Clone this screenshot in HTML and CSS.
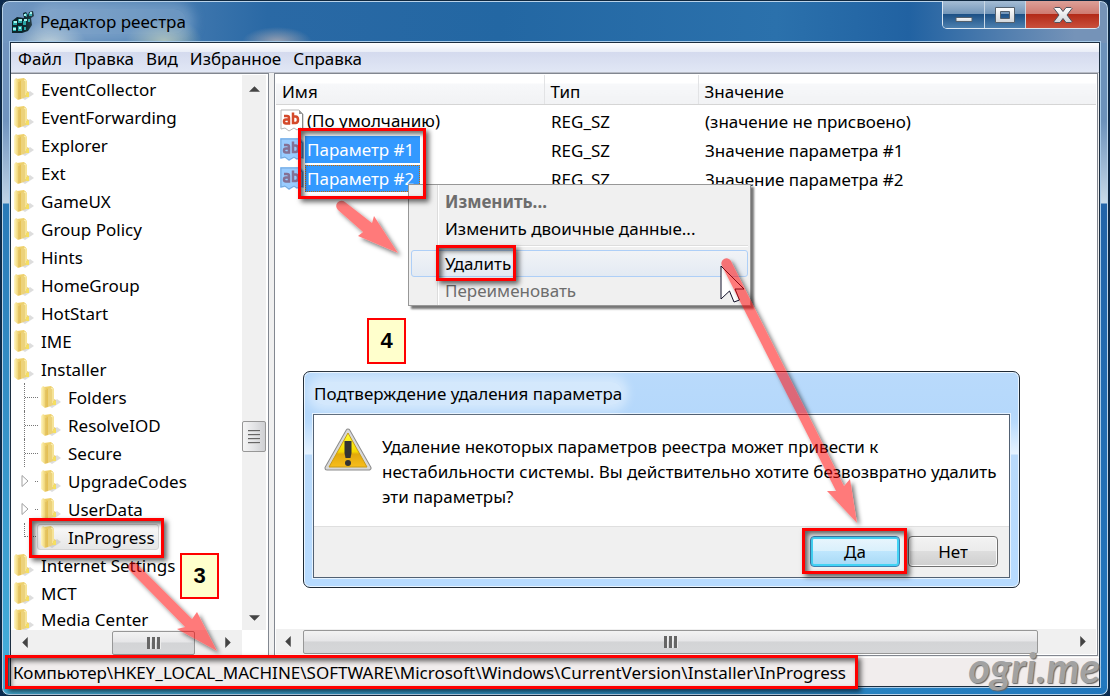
FILE: index.html
```html
<!DOCTYPE html>
<html lang="ru">
<head>
<meta charset="utf-8">
<title>Редактор реестра</title>
<link rel="stylesheet" href="styles.css">
</head>
<body>
<svg class="defs" aria-hidden="true">
  <defs>
    <linearGradient id="fold" x1="0" x2="1" y1="0" y2="0"><stop offset="0" stop-color="#fff6c4"/><stop offset=".45" stop-color="#f3dc84"/><stop offset="1" stop-color="#e4bd4c"/></linearGradient>
    <linearGradient id="warn" x1="0" x2="0" y1="0" y2="1"><stop offset="0" stop-color="#ffff35"/><stop offset=".55" stop-color="#f6d800"/><stop offset=".62" stop-color="#e2a90c"/><stop offset="1" stop-color="#f7bd1c"/></linearGradient>
    <linearGradient id="glyph" x1="0" x2="0" y1="0" y2="1"><stop offset="0" stop-color="#fff"/><stop offset="1" stop-color="#d2d6da"/></linearGradient>
    <filter id="outer" x="-10%" y="-10%" width="130%" height="130%">
      <feOffset in="SourceAlpha" dx="3" dy="3" result="moved"/>
      <feGaussianBlur in="moved" stdDeviation="2" result="soft"/>
      <feComponentTransfer in="SourceAlpha" result="solid"><feFuncA type="linear" slope="2"/></feComponentTransfer>
      <feComposite in="soft" in2="solid" operator="out" result="shade"/>
      <feMerge><feMergeNode in="shade"/><feMergeNode in="SourceGraphic"/></feMerge>
    </filter>
  </defs>
  <symbol id="folder" viewBox="0 0 22 24">
    <path d="M9 21 17 14 21 17 12 23Z" fill="#a9a9a9" opacity=".4"/>
    <path d="M4 2 11 1 13 3V18L8 21Z" fill="#eed06b"/>
    <path d="M1 3 3 1 8 4V22L5 23 1 20Z" fill="url(#fold)"/>
    <path d="M8 4 12 2 14 4V14L16 15V19L8 22Z" fill="#ecd27b"/>
    <path d="M11 3 13 4V18" fill="none" stroke="#fff4b5" stroke-width="1"/>
    <path d="M6 5V22" stroke="#dcb95a" stroke-width="1"/>
    <path d="M13 16h3v4h-3z" fill="#f5df61"/>
  </symbol>
  <symbol id="text" viewBox="0 0 24 23">
    <path d="M1 1H19L23 5V20L20 19 17 21 14 19 9 22 5 19 1 20Z" fill="#fff" stroke="#b5b5b5"/>
    <path d="M19 1V5H23Z" fill="#999"/>
    <path d="M22.500 5V20" stroke="#888" stroke-width="1"/>
    <g fill="none" stroke="#d4492a" stroke-width="2.500"><path d="M4 7H7Q9 7 9 9V14.500H6Q4 14.500 4 12.500T6 10.500H9"/><path d="M13 3.500V14H15.500Q18 14 18 10.800T15.500 7.500H13"/></g>
  </symbol>
  <symbol id="text-on" viewBox="0 0 24 23">
    <use href="#text"/>
    <path d="M0 0H20L24 4V21L20 20 17 22 14 20 9 23 5 20 0 21Z" fill="#3399ff" opacity=".5"/>
  </symbol>
</svg>
<main class="window">
  <header class="titlebar">
    <svg class="app" viewBox="0 0 24 24"><path d="M1 11 6 7 13 8 12 3 15 2 17 5 18 2 22 1 23 6 20 8 21 15 17 21 11 23H1Z" fill="#0d252b"/><g fill="#27a5a5"><path d="M2 11h4v4H2zM7 9h4v4H7zM2 17h3v4H2zM7 16h4v5H7zM14 3l2 1v3l-2-1zM12 11h3v4h-3zM18 3l3-1v4h-3zM17 9h2v3h-2zM13 17h2v3h-2z"/></g><g fill="#a6f6ee"><path d="M3 11h3v2H3zM8 9h3v2H8zM13 9h3v2h-3zM2 18h3v2H2zM8 17h2v2H8zM19 2h2v2h-2zM13 4h2v2h-2z"/></g></svg>
    <h1>Редактор реестра</h1>
    <div class="controls">
      <button aria-label="Свернуть"><svg viewBox="0 0 20 20"><path d="M2 12.500h16v4H2z" fill="url(#glyph)" stroke="#53606d"/></svg></button>
      <button aria-label="Развернуть"><svg viewBox="0 0 20 20"><path d="M.5 2.500h19v15H.5zM5.500 6.500v7h9v-7z" fill="url(#glyph)" fill-rule="evenodd" stroke="#53606d"/></svg></button>
      <button class="close" aria-label="Закрыть"><svg viewBox="0 0 20 20"><path d="M2 2.500h5l3 4 3-4h5l1 1-5 6.500 5 6.500-1 1h-5l-3-4-3 4H2l-1-1L6 10 1 3.500Z" fill="url(#glyph)" stroke="#4f535e"/></svg></button>
    </div>
  </header>
  <div class="client">
    <nav class="menubar"><button>Файл</button><button>Правка</button><button>Вид</button><button>Избранное</button><button>Справка</button></nav>
    <div class="panes">
      <section class="pane tree">
        <ul>
          <li><svg><use href="#folder"/></svg><span>EventCollector</span></li>
          <li><svg><use href="#folder"/></svg><span>EventForwarding</span></li>
          <li><svg><use href="#folder"/></svg><span>Explorer</span></li>
          <li><svg><use href="#folder"/></svg><span>Ext</span></li>
          <li><svg><use href="#folder"/></svg><span>GameUX</span></li>
          <li><svg><use href="#folder"/></svg><span>Group Policy</span></li>
          <li><svg><use href="#folder"/></svg><span>Hints</span></li>
          <li><svg><use href="#folder"/></svg><span>HomeGroup</span></li>
          <li><svg><use href="#folder"/></svg><span>HotStart</span></li>
          <li><svg><use href="#folder"/></svg><span>IME</span></li>
          <li><svg><use href="#folder"/></svg><span>Installer</span></li>
          <li class="child"><i></i><svg><use href="#folder"/></svg><span>Folders</span></li>
          <li class="child"><i></i><svg><use href="#folder"/></svg><span>ResolveIOD</span></li>
          <li class="child"><i></i><svg><use href="#folder"/></svg><span>Secure</span></li>
          <li class="child"><i class="more"><svg viewBox="0 0 8 14"><path d="M1 1.500 7 7 1 12.500Z" fill="#fff" stroke="#a0a0a0"/></svg></i><svg><use href="#folder"/></svg><span>UpgradeCodes</span></li>
          <li class="child"><i class="more"><svg viewBox="0 0 8 14"><path d="M1 1.500 7 7 1 12.500Z" fill="#fff" stroke="#a0a0a0"/></svg></i><svg><use href="#folder"/></svg><span>UserData</span></li>
          <li class="child last"><i></i><b><svg><use href="#folder"/></svg><span>InProgress</span></b></li>
          <li><svg><use href="#folder"/></svg><span>Internet Settings</span></li>
          <li><svg><use href="#folder"/></svg><span>MCT</span></li>
          <li class="end"><svg><use href="#folder"/></svg><span>Media Center</span></li>
        </ul>
        <div class="vbar"><svg viewBox="0 0 12 6"><path d="M0 6 6 0 12 6Z"/></svg><div class="grip"></div><svg viewBox="0 0 12 6"><path d="M0 0H12L6 6Z"/></svg></div>
        <div class="hbar"><svg viewBox="0 0 6 12"><path d="M6 0V12L0 6Z"/></svg><div class="thumb"></div><svg viewBox="0 0 6 12"><path d="M0 0V12L6 6Z"/></svg></div>
      </section>
      <section class="pane values">
        <table>
          <thead><tr><th class="name">Имя</th><th class="type">Тип</th><th>Значение</th></tr></thead>
          <tbody>
            <tr><td><div class="cell"><svg><use href="#text"/></svg><span>(По умолчанию)</span></div></td><td>REG_SZ</td><td>(значение не присвоено)</td></tr>
            <tr class="on"><td><div class="cell"><svg><use href="#text-on"/></svg><span>Параметр #1</span></div></td><td>REG_SZ</td><td>Значение параметра #1</td></tr>
            <tr class="on focus"><td><div class="cell"><svg><use href="#text-on"/></svg><span>Параметр #2</span></div></td><td>REG_SZ</td><td>Значение параметра #2</td></tr>
          </tbody>
        </table>
        <div class="hbar"><svg viewBox="0 0 6 12"><path d="M6 0V12L0 6Z"/></svg><div class="thumb"></div><svg viewBox="0 0 6 12"><path d="M0 0V12L6 6Z"/></svg></div>
      </section>
    </div>
    <footer class="status">Компьютер\HKEY_LOCAL_MACHINE\SOFTWARE\Microsoft\Windows\CurrentVersion\Installer\InProgress</footer>
  </div>
</main>

<div class="context" role="menu">
  <button class="strong" role="menuitem" disabled>Изменить...</button>
  <button role="menuitem">Изменить двоичные данные...</button>
  <hr>
  <button class="hot" role="menuitem">Удалить</button>
  <button role="menuitem" disabled>Переименовать</button>
</div>

<section class="dialog" role="dialog" aria-labelledby="dlg">
  <h2 id="dlg"><span>Подтверждение удаления параметра</span></h2>
  <div class="box">
    <div class="message">
      <svg viewBox="0 0 48 44"><path d="M24 3 45 40H3Z" fill="#8c8c8c" stroke="#8c8c8c" stroke-width="5" stroke-linejoin="round"/><path d="M24 3 45 40H3Z" fill="#ddd" stroke="#d9d9d9" stroke-width="3" stroke-linejoin="round"/><path d="M24 5 43 39H5Z" fill="url(#warn)" stroke="#c89b18"/><path d="M20.500 13h7v12l-1 5h-5l-1-5Z" fill="#333"/><circle cx="24" cy="35" r="3" fill="#333"/></svg>
      <p>Удаление некоторых параметров реестра может привести к нестабильности системы. Вы действительно хотите безвозвратно удалить эти параметры?</p>
    </div>
    <div class="actions"><button class="default">Да</button><button>Нет</button></div>
  </div>
</section>

<svg class="cursor" viewBox="0 0 26 40"><path d="M1 1V34L9.500 26 14 37 19.500 35 15 24H24Z" fill="#fff" stroke="#101028" stroke-width="1"/></svg>
<svg class="arrows" viewBox="0 0 1110 696">
  <g filter="url(#outer)">
    <path d="M345 202 372 223 374 216 398 253 358 236 363 232 338 210A5 5 0 0 1 345 202Z"/>
    <path d="M731 261 844 486 850 479 857 523 827 491 836 491 722 266A5 5 0 0 1 731 261Z"/>
    <path d="M137 564 192 619 197 612 217 651 177 629 185 627 129 570A5 5 0 0 1 137 564Z"/>
  </g>
</svg>
<div class="mark params"></div>
<div class="mark delete"></div>
<div class="mark yes"></div>
<div class="mark key"></div>
<div class="mark path"></div>
<div class="step three">3</div>
<div class="step four">4</div>
<div class="signature">ogri.me</div>
</body>
</html>
```
FILE: styles.css
```css
* { box-sizing: border-box; }
body { margin: 0; padding: 0 1px; position: relative; min-height: 100vh; background: #0b2a4e; color: #000; font: 17px/25px "Noto Sans", "Open Sans", sans-serif; overflow: hidden; }
button { font: inherit; color: inherit; border: 0; background: none; padding: 0; }
h1, h2, p, ul { margin: 0; padding: 0; font-size: inherit; font-weight: normal; }
.defs { position: absolute; width: 0; height: 0; }

.window {
  display: flex; flex-direction: column; height: 100vh; padding: 0 8px 8px;
  border: 1px solid #10283f; border-radius: 8px; overflow: hidden;
  box-shadow: inset 0 0 0 1px #b9d3ea;
  background:
    radial-gradient(closest-side, #c3cfb0cc, #c3cfb000) 124px 16px / 76px 48px no-repeat,
    radial-gradient(closest-side, #dce6e0cc, #dce6e000) 12px 20px / 72px 46px no-repeat,
    radial-gradient(closest-side, #b8b0b4cc, #b8b0b400) 240px 26px / 70px 30px no-repeat,
    linear-gradient(90deg, #7297c1 0, #4d80b4 12%, #2a69a5 24%, #2367a3 45%, #2b71ac 70%, #2162a2 82%, #7593b8 97%) top / 100% 42px no-repeat,
    linear-gradient(90deg, #45acd4, #2f93c8 50%, #2176bc) bottom / 100% 9px no-repeat,
    linear-gradient(#7094bf 120px, #c0d4e6 202px, #2a7ab8 203px, #45b0dc) left / 10px 100% no-repeat,
    linear-gradient(#6c92bb 120px, #c8dbea 202px, #2264a8 203px, #2278bf) right / 10px 100% no-repeat,
    #2b79b6;
}
.titlebar { display: flex; align-items: flex-start; height: 41px; flex: none; }
.app { width: 24px; height: 24px; margin: 9px 0 0 1px; }
h1 { margin: 8px 0 0 5px; border-radius: 12px; background: #a9c3dc66; box-shadow: 0 0 12px 8px #a9c3dc66; }
.controls { display: flex; margin: 0 0 0 auto; height: 28px; border: 1px solid #dbe7f2; border-top: 0; border-radius: 0 0 5px 5px; overflow: hidden; }
.controls button { width: 42px; display: grid; place-items: center; border-right: 1px solid #c9d8e6; background: linear-gradient(#a5bdd5, #7396b9 48%, #1d5186 50%, #4d80af); }
.controls button + button { width: 41px; }
.controls button.close { width: 73px; border: 0; background: linear-gradient(#dda098, #cf7a70 48%, #b32a18 50%, #c9503c); }
.controls svg { width: 20px; height: 20px; }

.client { flex: 1; min-height: 0; display: flex; flex-direction: column; border: 1px solid #1c2e40; box-shadow: 0 0 0 1px #a9cbe8; background: #f0f0f0; }
.menubar { display: flex; gap: 12px; height: 30px; padding: 1px 7px 0; flex: none; align-items: center; background: linear-gradient(#fff, #e9edf7 9px, #d4daee 9px, #e1e7f5); border-bottom: 1px solid #b8bcc6; }
.panes { flex: 1; min-height: 0; display: grid; grid-template-columns: 258px 1fr; gap: 5px; padding-right: 1px; }
.pane { background: #fff; border: 1px solid #828790; min-width: 0; min-height: 0; }
.tree { border-left: 0; display: grid; grid-template-columns: 1fr 24px; grid-template-rows: 1fr 25px; padding: 1px 2px 0 0; }
ul { list-style: none; overflow: hidden; min-height: 0; }
li, li b { display: flex; align-items: center; height: 28px; gap: 6px; font-weight: normal; }
li { padding-left: 2px; white-space: nowrap; }
li svg { width: 22px; height: 24px; flex: none; }
.end { height: 26px; line-height: 20px; }
.child { padding-left: 13px; gap: 0; }
.child > svg { margin-right: 6px; }
.child i { width: 16px; height: 28px; flex: none; border-left: 1px dotted #777; background: repeating-linear-gradient(90deg, #777 0 1px, transparent 1px 2px) 0 14px / 14px 1px no-repeat; }
.child i.more { margin-left: -3px; width: 19px; padding-top: 7px; border: 0; background-size: 3px 1px; background-position: 14px 14px; }
.child i.more svg { display: block; width: 8px; height: 14px; }
.last i { height: 14px; align-self: flex-start; background-position-y: 13px; width: 13px; }
.last b { height: 26px; padding: 0 3px 0 2px; border: 1px solid #d4d4d4; border-radius: 3px; background: linear-gradient(#fafafa, #e6e6e6); }

.vbar { background: #f0f0f0; display: flex; flex-direction: column; align-items: center; padding: 11px 0 9px; }
.vbar svg { width: 11px; height: 6px; flex: none; fill: #444; }
.grip { width: 24px; height: 31px; margin: 329px 0 auto; border: 1px solid #979797; border-radius: 2px; background: repeating-linear-gradient(#666 0 1px, #ccc 1px 2px, transparent 2px 4px) center / 12px 14px no-repeat, linear-gradient(90deg, #f5f5f5, #e3e4e6 50%, #cfd0d3); }
.hbar { display: flex; align-items: center; background: #f0f0f0; height: 25px; }
.hbar svg { width: 6px; height: 11px; flex: none; fill: #444; }
.hbar .thumb { height: 24px; border: 1px solid #979797; border-radius: 2px; background: repeating-linear-gradient(90deg, #666 0 3px, #eee 3px 4px, transparent 4px 5px) center / 14px 12px no-repeat, linear-gradient(#f3f3f3, #e6e6e8 45%, #d3d4d6 50%, #d6d7d9); }
.tree .hbar { padding: 0 11px; }
.tree .thumb { width: 83px; margin: 0 auto 0 84px; }

.values { display: flex; flex-direction: column; justify-content: space-between; padding: 1px; }
.values .hbar { padding: 0 10px 0 9px; }
.values .hbar .thumb { flex: 1; margin: 0 42px 0 12px; }
table { width: 100%; border-collapse: collapse; table-layout: fixed; text-align: left; }
th { height: 29px; padding: 4px 6px 0; font-weight: normal; background: linear-gradient(#fff 8px, #f7f8fa 9px, #f1f2f4); border-bottom: 1px solid #d5d5d5; border-right: 1px solid #e2e3e5; }
th.name { width: 268px; }
th.type { width: 154px; }
th:last-child { border-right: 0; }
td { height: 29px; padding: 4px 7px 0; }
td:first-child { padding: 2px 0 0 4px; }
.cell { display: flex; align-items: center; gap: 1px; }
.cell svg { width: 24px; height: 23px; flex: none; }
.cell span { padding: 0 5px 0 1px; border: 1px solid transparent; line-height: 25px; }
.on span { background: #3399ff; color: #fff; }
.focus .cell span { border: 1px dotted #c66900; }
.status { height: 29px; flex: none; margin-top: 1px; padding: 2px 2px 0; background: #f1eded; border-top: 1px solid #fff; white-space: nowrap; }

.context { position: absolute; left: 408px; top: 184px; width: 343px; padding: 3px 2px 1px; display: flex; flex-direction: column; background: linear-gradient(90deg, transparent 28px, #dcdcdc 28px 29px, #fff 29px 30px, transparent 30px), #f0f0f0; border: 1px solid #979797; box-shadow: 3px 3px 2px #777; }
.context button { height: 27px; padding-left: 33px; text-align: left; border: 1px solid transparent; border-radius: 3px; }
.context button:disabled { color: #6d6d6d; }
.context .strong { font-weight: bold; }
.context hr { width: calc(100% - 31px); height: 2px; margin: 3px 0 3px auto; border: 0; border-top: 1px solid #ddd; background: #fff; }
.context .hot { border-color: #aecff7; background: linear-gradient(#f1f3f6, #e3eaf3); }

.dialog { position: absolute; left: 303px; top: 371px; width: 717px; padding: 0 9px 9px; border: 1px solid #1f2a35; border-radius: 7px; box-shadow: inset 0 0 0 1px #eaf5ff; background: linear-gradient(#b9dafb, #b5d8fb 42px, #b8dafc 50px, #e6f3ff 82px, #b9dafb 83px, #b7dbff); }
.dialog h2 { height: 42px; padding: 9px 1px 0; }
.dialog h2 span { background: #ffffff66; box-shadow: 0 0 10px 6px #ffffff66; border-radius: 10px; }
.box { border: 1px solid #526173; box-shadow: 0 0 0 1px #e6f3ff; background: #fff; }
.message { display: flex; gap: 10px; height: 111px; padding: 13px 8px 0 10px; }
.message svg { width: 48px; height: 44px; flex: none; }
.message p { padding-top: 6px; }
.actions { display: flex; justify-content: flex-end; gap: 8px; padding: 9px 11px 10px; background: #f0f0f0; border-top: 1px solid #dfdfdf; }
.actions button { width: 90px; height: 31px; border: 1px solid #707070; border-radius: 4px; background: linear-gradient(#f3f3f3, #ebebeb 48%, #dddddd 50%, #cfcfcf); box-shadow: inset 0 0 0 1px #fbfbfb; }
.actions .default { border-color: #3c7fb1; background: linear-gradient(#eaf6fd, #d9f0fc 48%, #bee6fd 50%, #a7d9f5); box-shadow: inset 0 0 0 2px #43d3f5; }

.cursor { position: absolute; left: 720px; top: 265px; width: 26px; height: 40px; }
.arrows { position: absolute; left: 0; top: 0; width: 1110px; height: 696px; fill: #ff0000; fill-opacity: .52; pointer-events: none; }
.mark { position: absolute; border: 3px solid #ff0000; box-shadow: 3px 3px 5px #0009, inset 3px 3px 5px #0009; pointer-events: none; }
.params { left: 298px; top: 128px; width: 128px; height: 71px; }
.delete { left: 436px; top: 245px; width: 80px; height: 36px; }
.yes { left: 802px; top: 528px; width: 105px; height: 46px; }
.key { left: 29px; top: 518px; width: 135px; height: 40px; }
.path { left: 5px; top: 655px; width: 853px; height: 34px; }
.step { position: absolute; display: grid; place-items: center; width: 39px; height: 46px; border: 2px solid #ff0000; background: #ffffcc; font: bold 22px/28px "Liberation Sans", Arial, sans-serif; }
.three { left: 180px; top: 553px; }
.four { left: 367px; top: 318px; }
.signature { position: absolute; right: 10px; bottom: 10px; color: #a2a2a2; font: italic bold 42px/38px Lato, sans-serif; text-shadow: 1px 1px 1px #666; }
```
